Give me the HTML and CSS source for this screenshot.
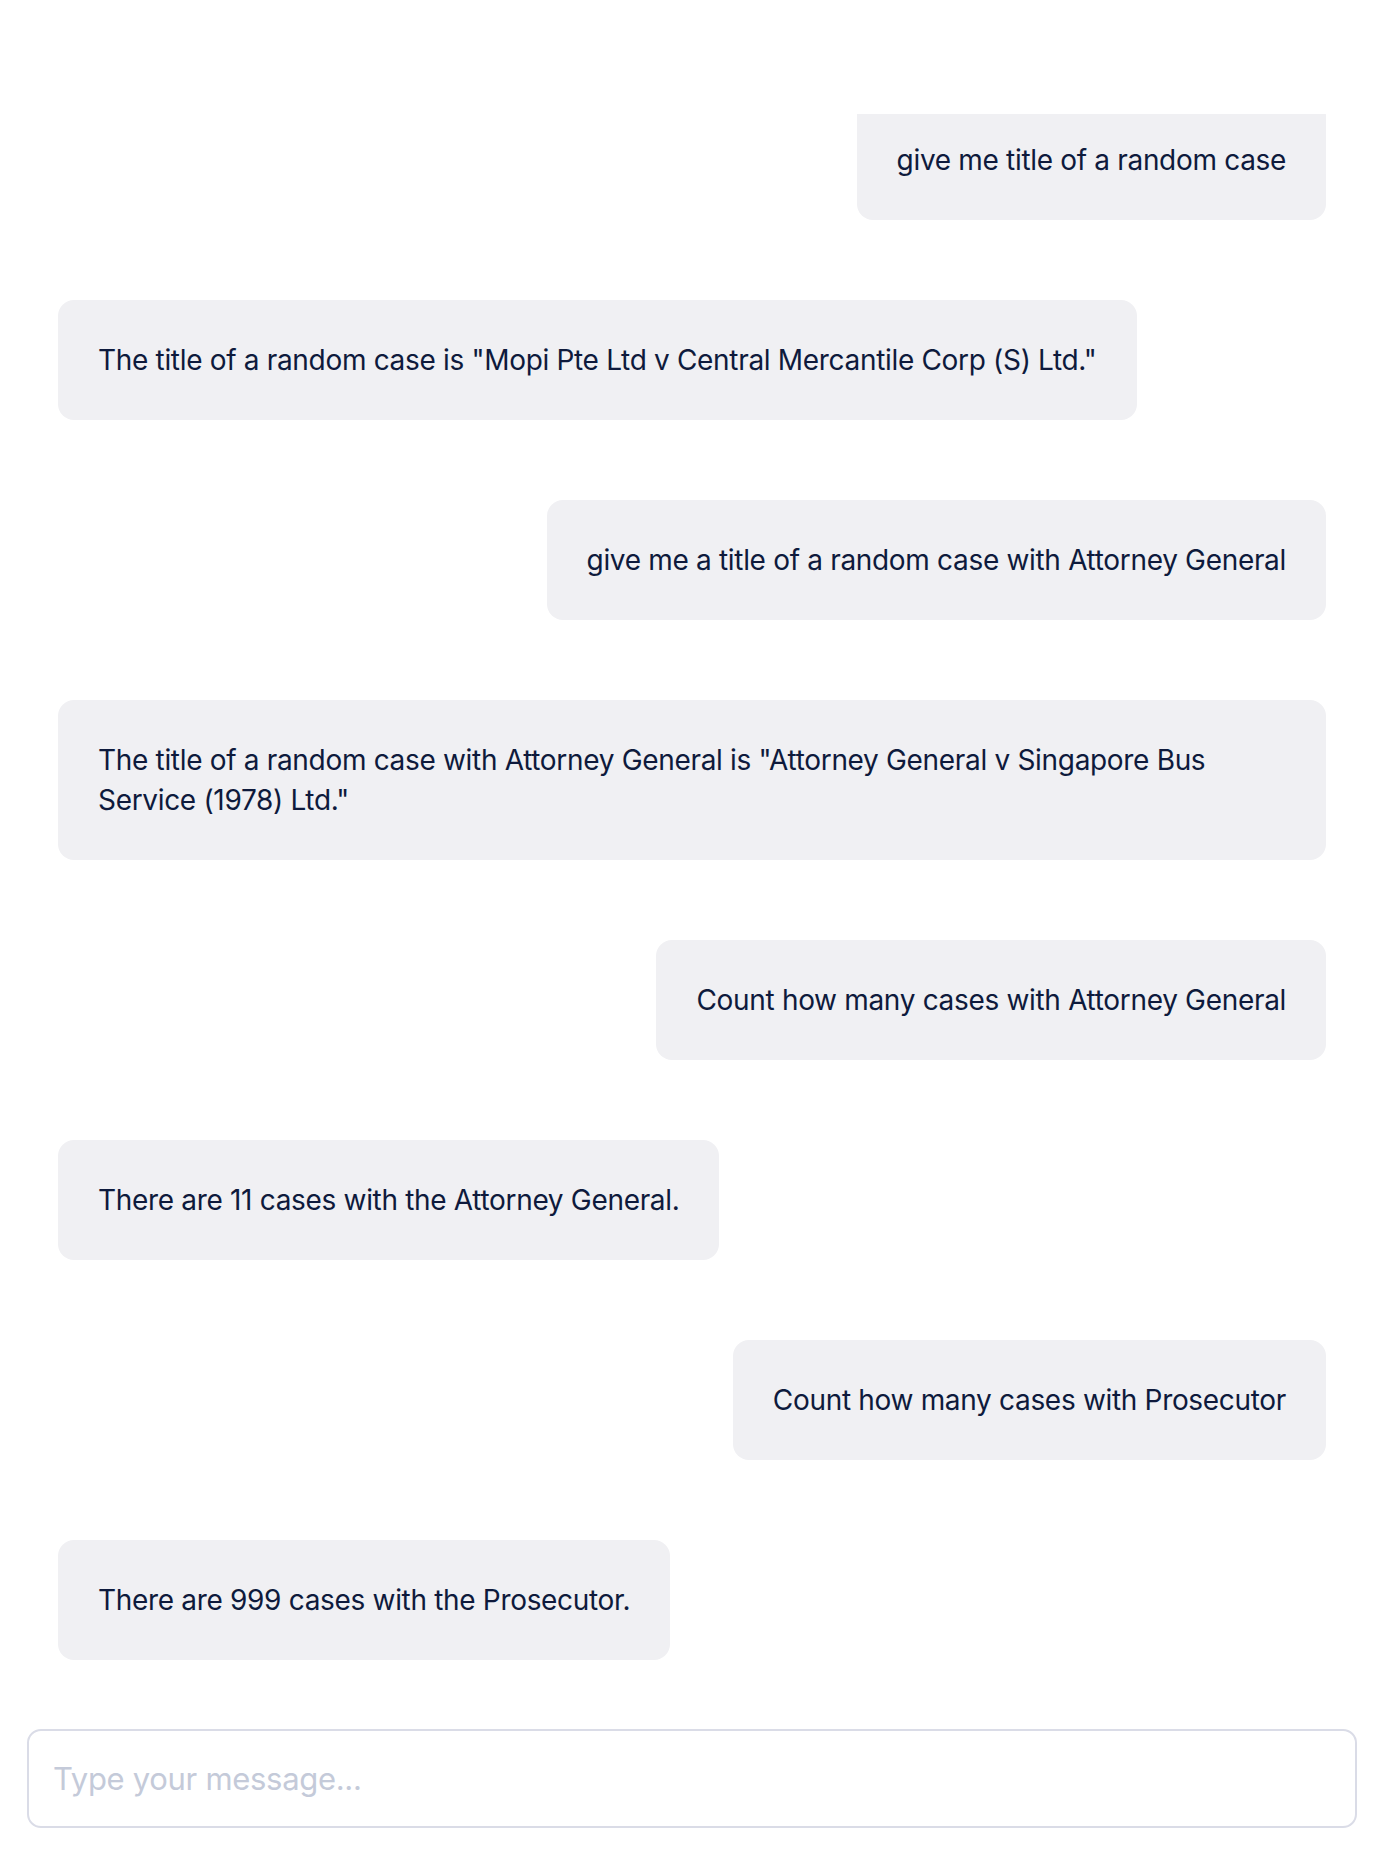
FILE: index.html
```html
<!DOCTYPE html>
<html lang="en">
<head>
<meta charset="utf-8">
<title>Chat</title>
<link rel="stylesheet" href="styles.css">
</head>
<body>
<div class="chat">
  <div class="messages">
    <div class="bubble user">give me title of a random case</div>
    <div class="bubble bot">The title of a random case is "Mopi Pte Ltd v Central Mercantile Corp (S) Ltd."</div>
    <div class="bubble user">give me a title of a random case with Attorney General</div>
    <div class="bubble bot">The title of a random case with Attorney General is "Attorney General v Singapore Bus Service (1978) Ltd."</div>
    <div class="bubble user">Count how many cases with Attorney General</div>
    <div class="bubble bot">There are 11 cases with the Attorney General.</div>
    <div class="bubble user">Count how many cases with Prosecutor</div>
    <div class="bubble bot">There are 999 cases with the Prosecutor.</div>
  </div>
  <form class="composer">
    <input class="composer-input" type="text" placeholder="Type your message...">
  </form>
</div>
</body>
</html>
```

FILE: styles.css
```css
html, body {
  margin: 0;
  padding: 0;
  background: #ffffff;
}

body {
  font-family: Inter, "Noto Sans", "Liberation Sans", sans-serif;
  color: #0e1a3c;
}

.chat {
  height: 1862px;
  box-sizing: border-box;
  padding-top: 114px;
  display: flex;
  flex-direction: column;
}

.messages {
  flex: 1;
  min-height: 0;
  overflow: hidden;
  display: flex;
  flex-direction: column;
  justify-content: flex-end;
  gap: 80px;
  padding: 0 58px;
}

.bubble {
  flex-shrink: 0;
  max-width: 100%;
  box-sizing: border-box;
  padding: 40px;
  border-radius: 16px;
  background: #f0f0f3;
  font-size: 28px;
  line-height: 40px;
  letter-spacing: -0.32px;
  color: #0e1a3c;
}

.bubble.user {
  align-self: flex-end;
}

.bubble.bot {
  align-self: flex-start;
}

.composer {
  margin: 0;
  padding: 69px 27px 34px;
}

.composer-input {
  display: block;
  width: 100%;
  height: 99px;
  box-sizing: border-box;
  border: 2px solid #dadce7;
  border-radius: 14px;
  padding: 0 24px;
  font-family: Inter, "Noto Sans", "Liberation Sans", sans-serif;
  font-size: 31px;
  letter-spacing: -0.3px;
  color: #0e1a3c;
  background: #ffffff;
  outline: none;
}

.composer-input::placeholder {
  color: #c4cad9;
}
```
